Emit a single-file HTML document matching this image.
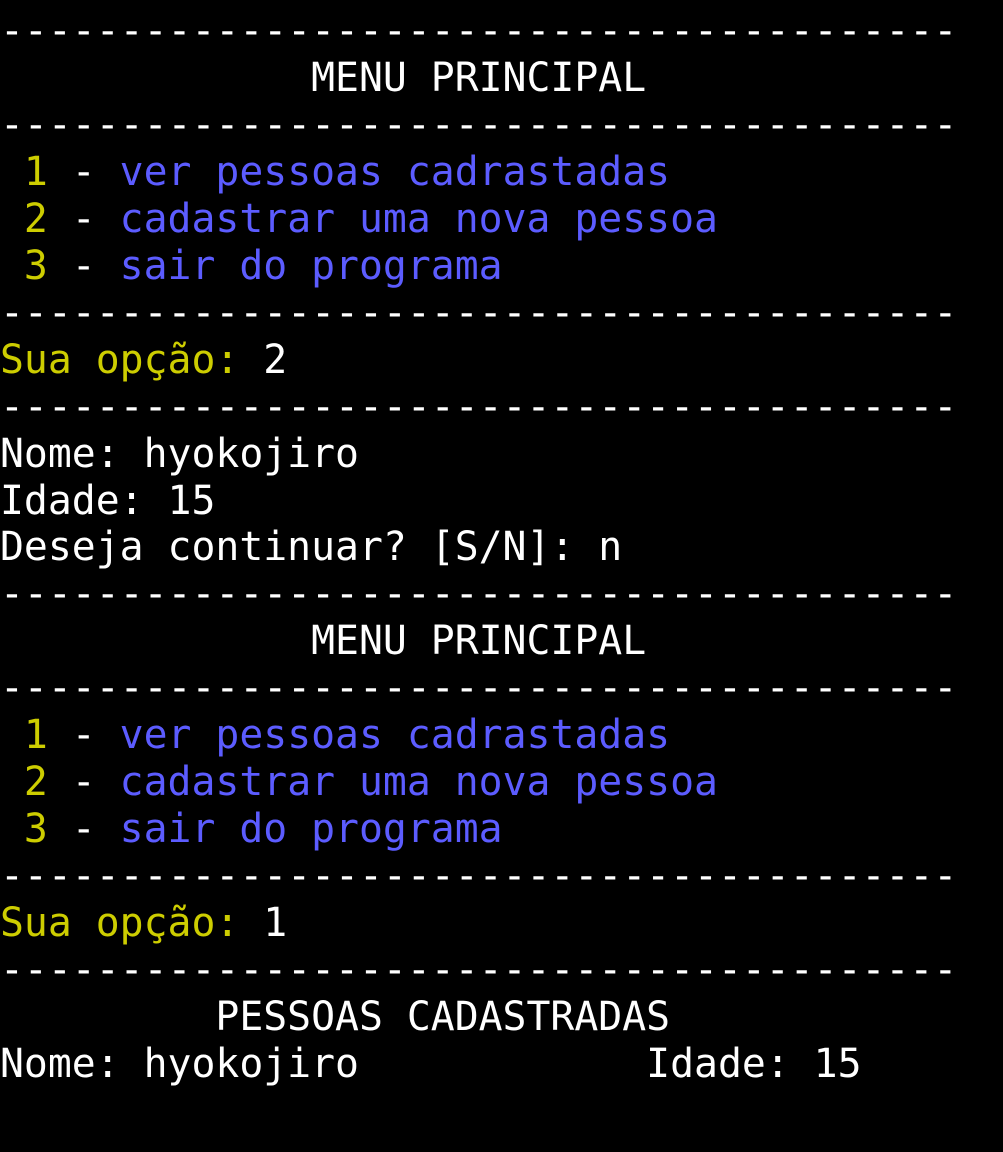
<!DOCTYPE html>
<html><head><meta charset="utf-8"><style>
html,body{margin:0;padding:0;background:#000;width:1003px;height:1152px;overflow:hidden}
pre{margin:0;position:absolute;left:0;top:8px;font-family:"DejaVu Sans Mono","Liberation Mono",monospace;font-size:39.75px;line-height:46.95px;color:#fff;white-space:pre}
.y{color:#cdcd00}.b{color:#5c5cff}
</style></head><body><pre>----------------------------------------
             MENU PRINCIPAL
----------------------------------------
<span class="y"> 1</span> - <span class="b">ver pessoas cadrastadas</span>
<span class="y"> 2</span> - <span class="b">cadastrar uma nova pessoa</span>
<span class="y"> 3</span> - <span class="b">sair do programa</span>
----------------------------------------
<span class="y">Sua opção: </span>2
----------------------------------------
Nome: hyokojiro
Idade: 15
Deseja continuar? [S/N]: n
----------------------------------------
             MENU PRINCIPAL
----------------------------------------
<span class="y"> 1</span> - <span class="b">ver pessoas cadrastadas</span>
<span class="y"> 2</span> - <span class="b">cadastrar uma nova pessoa</span>
<span class="y"> 3</span> - <span class="b">sair do programa</span>
----------------------------------------
<span class="y">Sua opção: </span>1
----------------------------------------
         PESSOAS CADASTRADAS
Nome: hyokojiro            Idade: 15
</pre></body></html>
